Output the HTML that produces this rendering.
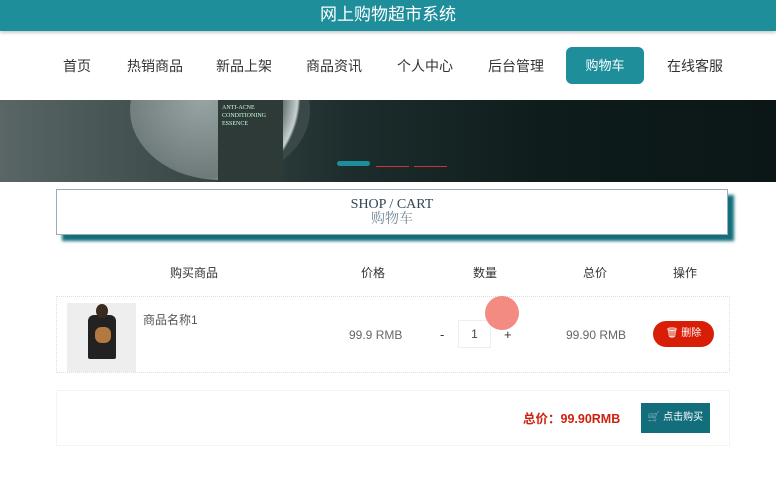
<!DOCTYPE html>
<html><head><meta charset="utf-8"><style>
*{margin:0;padding:0;box-sizing:border-box}
body{width:776px;height:500px;background:#fff;font-family:"Liberation Sans","Noto Sans CJK SC",sans-serif;position:relative;overflow:hidden}
.a{position:absolute}
.top{left:0;top:0;width:776px;height:31px;background:#1e8e9b;color:#fff;font-size:17px;text-align:center;line-height:30px;box-shadow:0 2px 3px rgba(0,0,0,.2)}
.nav span{position:absolute;top:56px;font-size:14px;color:#333}
.cartbtn{left:566px;top:47px;width:78px;height:37px;background:#1e8e9b;border-radius:6px;color:#fff;font-size:13px;text-align:center;line-height:37px}
.banner{left:0;top:100px;width:776px;height:82px;background:linear-gradient(90deg,#5a6666 0%,#3a4848 25%,#1d2c2c 45%,#0e1c1c 70%,#0c1616 100%);overflow:hidden}
.hd{font-size:12px;color:#333;top:264px}
</style></head><body>
<div class="a top">网上购物超市系统</div>
<div class="nav">
<span style="left:63px">首页</span><span style="left:127px">热销商品</span><span style="left:216px">新品上架</span><span style="left:306px">商品资讯</span><span style="left:397px">个人中心</span><span style="left:488px">后台管理</span><span style="left:667px">在线客服</span>
</div>
<div class="a cartbtn">购物车</div>
<div class="a banner">
<div class="a" style="left:130px;top:-60px;width:180px;height:140px;border-radius:50%;background:radial-gradient(circle at 40% 40%,#9aa5a5,#6e7a7a 60%,#c8d0d0 70%,#3a4848 72%)"></div>
<div class="a" style="left:218px;top:0;width:65px;height:82px;background:#2e3a38"></div>
<div class="a" style="left:222px;top:4px;color:#cfd;font:6px 'Liberation Serif',serif;line-height:8px">ANTI-ACNE<br>CONDITIONING<br>ESSENCE</div>
<div class="a" style="left:337px;top:61px;width:33px;height:5px;background:#1e8e9b;border-radius:3px"></div>
<div class="a" style="left:376px;top:66px;width:33px;height:1px;background:#c33"></div>
<div class="a" style="left:414px;top:66px;width:33px;height:1px;background:#c33"></div>
</div>
<div class="a" style="left:56px;top:189px;width:672px;height:46px;background:#fff;border:1px solid #9ab;box-shadow:6px 6px 3px #136e7c;text-align:center;font-family:'Liberation Serif','Noto Serif CJK SC',serif;line-height:15px;padding-top:7px">
<div style="font-size:14px;color:#345">SHOP / CART</div><div style="font-size:14px;color:#789">购物车</div></div>
<div class="a hd" style="left:170px">购买商品</div>
<div class="a hd" style="left:361px">价格</div>
<div class="a hd" style="left:473px">数量</div>
<div class="a hd" style="left:583px">总价</div>
<div class="a hd" style="left:673px">操作</div>
<div class="a" style="left:56px;top:296px;width:674px;height:77px;border:1px dotted #ddd"></div>
<div class="a" style="left:67px;top:303px;width:69px;height:69px;background:#eee"></div>
<div class="a" style="left:88px;top:315px;width:28px;height:44px;background:#222;border-radius:6px 6px 2px 2px"></div>
<div class="a" style="left:96px;top:304px;width:12px;height:14px;background:#3a2a20;border-radius:50%"></div>
<div class="a" style="left:95px;top:327px;width:16px;height:16px;background:#b4793e;border-radius:40%"></div>
<div class="a" style="left:143px;top:311px;font-size:12px;color:#555">商品名称1</div>
<div class="a" style="left:349px;top:328px;font-size:12px;color:#666">99.9 RMB</div>
<div class="a" style="left:440px;top:327px;font-size:13px;color:#333">-</div>
<div class="a" style="left:458px;top:320px;width:33px;height:28px;border:1px solid #eee;font-size:12px;text-align:center;line-height:26px;color:#444">1</div>
<div class="a" style="left:504px;top:327px;font-size:13px;color:#333">+</div>
<div class="a" style="left:485px;top:296px;width:34px;height:34px;border-radius:50%;background:rgba(240,110,100,.8)"></div>
<div class="a" style="left:566px;top:328px;font-size:12px;color:#666">99.90 RMB</div>
<div class="a" style="left:653px;top:321px;width:61px;height:26px;border-radius:13px;background:#d81e06;color:#fff;font-size:10px;line-height:26px;text-align:center">🗑 删除</div>
<div class="a" style="left:56px;top:390px;width:674px;height:56px;border:1px solid #f4f4f4"></div>
<div class="a" style="left:523px;top:408px;font-size:12.5px;font-weight:bold;color:#d02010">总价：99.90RMB</div>
<div class="a" style="left:641px;top:403px;width:69px;height:30px;background:#136e7c;color:#fff;font-size:10px;line-height:30px;text-align:center">🛒 点击购买</div>
</body></html>
